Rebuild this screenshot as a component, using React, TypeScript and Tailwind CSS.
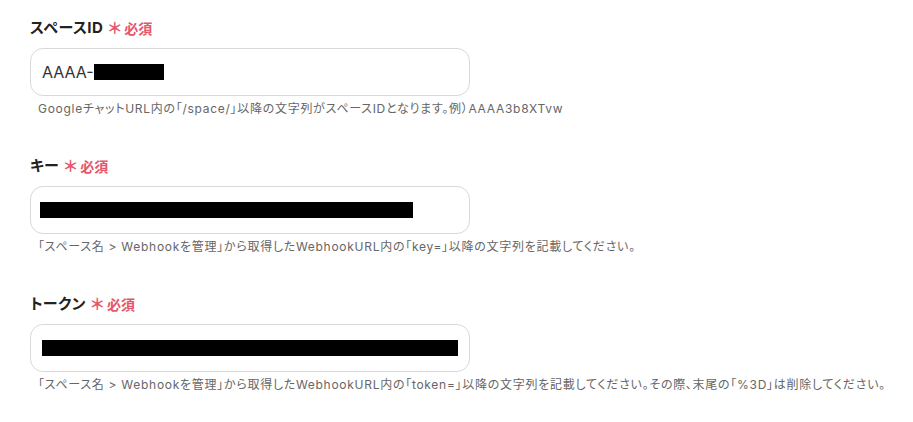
const FONT = "font-['Inter','Noto_Sans_CJK_JP',sans-serif] [font-feature-settings:'palt']";

type Field = {
  label: string;
  prefix?: string;
  barWidth: string;
  barOffset: string;
  help: string;
};

const fields: Field[] = [
  {
    label: "スペースID",
    prefix: "AAAA-",
    barWidth: "w-[70px]",
    barOffset: "ml-0",
    help: "GoogleチャットURL内の「/space/」以降の文字列がスペースIDとなります。例）AAAA3b8XTvw",
  },
  {
    label: "キー",
    barWidth: "w-[373px]",
    barOffset: "-ml-[2px]",
    help: "「スペース名 > Webhookを管理」から取得したWebhookURL内の「key=」以降の文字列を記載してください。",
  },
  {
    label: "トークン",
    barWidth: "w-[417px]",
    barOffset: "ml-0",
    help: "「スペース名 > Webhookを管理」から取得したWebhookURL内の「token=」以降の文字列を記載してください。その際、末尾の「%3D」は削除してください。",
  },
];

function FormField({ f }: { f: Field }) {
  return (
    <div className="flex flex-col">
      <div className="flex items-center h-[22px]">
        <span className="text-[15px] font-bold text-[#222] tracking-[0.4px]">{f.label}</span>
        <span className="ml-[5px] text-[16px] font-semibold text-[#e5566b] leading-none">＊</span>
        <span className="ml-[3px] text-[14px] font-bold text-[#e5566b]">必須</span>
      </div>
      <div className="mt-[9px] w-[440px] h-[48px] rounded-[13px] border border-[#d9d9d9] bg-white flex items-center px-[11px]">
        {f.prefix && <span className="text-[16px] text-[#333]">{f.prefix}</span>}
        <div className={`${f.barWidth} ${f.barOffset} h-[16px] bg-black`} />
      </div>
      <p className="mt-[5px] pl-[8px] text-[12px] leading-[16px] text-[#666] tracking-[0.72px] whitespace-nowrap">
        {f.help}
      </p>
    </div>
  );
}

export default function App() {
  return (
    <main className={`min-h-screen w-full bg-white pt-[17px] px-[30px] ${FONT}`}>
      <div className="flex flex-col gap-[38px]">
        {fields.map((f) => (
          <FormField key={f.label} f={f} />
        ))}
      </div>
    </main>
  );
}
